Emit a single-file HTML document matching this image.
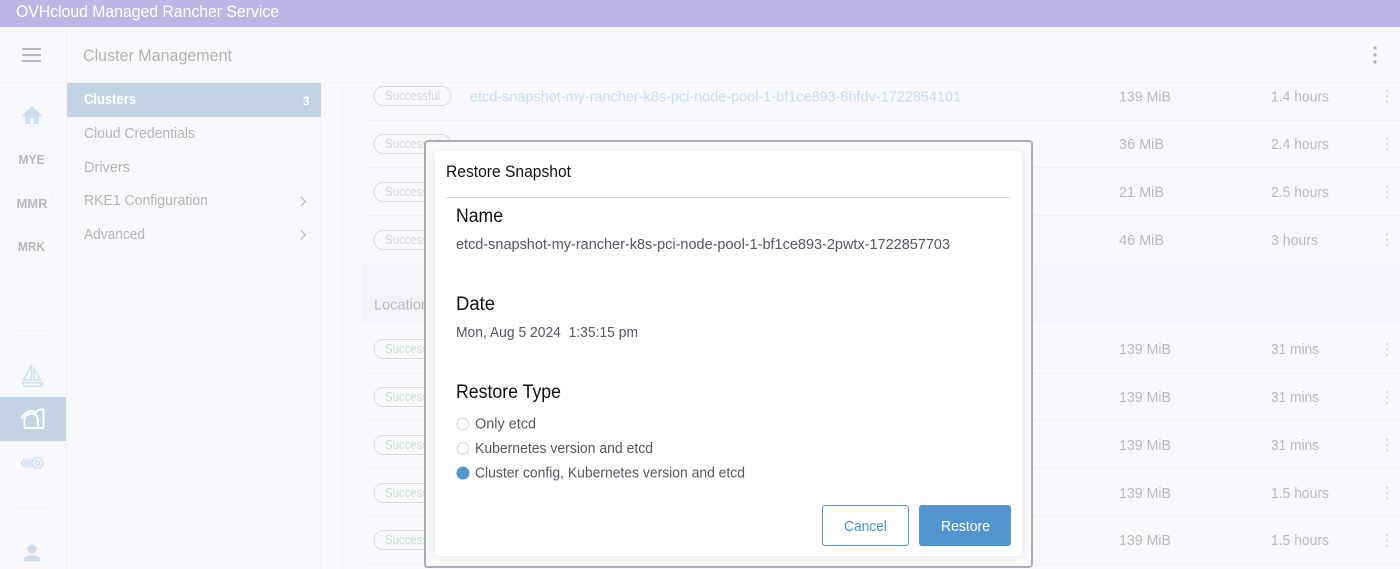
<!DOCTYPE html>
<html lang="en">
<head>
<meta charset="utf-8">
<title>Cluster Management</title>
<style>
html,body{margin:0;padding:0;width:1400px;height:569px;overflow:hidden;background:#f7f7fc}
svg{display:block;position:absolute;left:0;top:0;filter:blur(.3px)}
text{font-family:"Liberation Sans",sans-serif;white-space:pre}
.m{fill:#b4b4bc;font-size:14.5px}
.r{fill:#b9b9c1;font-size:14.5px}
.s{fill:#cddbd1;font-size:12.5px}
.d{fill:#55555f;font-size:14.5px}
.h{fill:#111;font-size:19px}
</style>
</head>
<body>
<svg width="1400" height="569" viewBox="0 0 1400 569" xmlns="http://www.w3.org/2000/svg">
<defs>
<filter id="sh" x="-5%" y="-5%" width="110%" height="110%"><feGaussianBlur stdDeviation="5"/></filter>
</defs>
<rect width="1400" height="569" fill="#f7f7fc"/>
<!-- top bar -->
<rect width="1400" height="27" fill="#bcb6e6"/>
<text x="16" y="17" fill="#fff" font-size="17" textLength="263" lengthAdjust="spacingAndGlyphs">OVHcloud Managed Rancher Service</text>
<!-- header -->
<rect x="0" y="82" width="1400" height="1" fill="#f0f0f6"/>
<rect x="66" y="27" width="1" height="542" fill="#f0f0f6"/>
<g fill="#b8b8c0"><rect x="22" y="48" width="19" height="2"/><rect x="22" y="54" width="19" height="2"/><rect x="22" y="60" width="19" height="2"/></g>
<text x="83" y="61" fill="#b2b2ba" font-size="17" textLength="149" lengthAdjust="spacingAndGlyphs">Cluster Management</text>
<g fill="#b0b0b8"><circle cx="1375" cy="48" r="1.6"/><circle cx="1375" cy="55" r="1.6"/><circle cx="1375" cy="62" r="1.6"/></g>
<!-- icon rail -->
<path d="M32 106 L22 116 H25 V124 H30 V118 H34 V124 H39 V116 H42 Z" fill="#c9deef"/>
<g fill="#f7f7fc" stroke="#f3f3f8"><rect x="11" y="145.500" width="41" height="27" rx="5"/><rect x="11" y="189.500" width="41" height="27" rx="5"/><rect x="11" y="232.500" width="41" height="27" rx="5"/></g>
<g fill="#b7b7bf" font-size="13" font-weight="700">
<text x="18.500" y="164" textLength="26" lengthAdjust="spacingAndGlyphs">MYE</text>
<text x="16.500" y="208" textLength="31" lengthAdjust="spacingAndGlyphs">MMR</text>
<text x="18" y="251" textLength="27" lengthAdjust="spacingAndGlyphs">MRK</text>
</g>
<rect x="12" y="330" width="41" height="1" fill="#f0f0f6"/>
<rect x="12" y="507" width="41" height="1" fill="#f0f0f6"/>
<!-- boat -->
<g fill="none" stroke="#cfe0f0" stroke-width="1.500">
<path d="M31.500 365 L23.500 380 H31.500 Z"/>
<path d="M34 369 V380 H40.500 Z"/>
<path d="M22.500 382.800 H42.500 L41 386.200 H24 Z"/>
</g>
<!-- active -->
<rect x="0" y="397" width="66" height="44" fill="#c2d4e4"/>
<g fill="none" stroke="#fff" stroke-width="1.900" stroke-linejoin="round" stroke-linecap="round">
<path d="M21.500 418 C24 413.500 28 411 31.500 411 C33 411 35 412 36 413"/>
<path d="M36 413 C37 410.500 39 409.500 41 409.500 L43.500 409.500 V428 H24.500 V418"/>
<path d="M24.500 418 C26 415 29 413.500 31.500 413.500 C35 413.500 38 417 38 421 V428"/>
</g>
<!-- fleet -->
<g fill="none" stroke="#cfe0f0" stroke-width="1.500">
<path d="M25 458.500 L21.500 463 L25 467.500"/><path d="M28 458.500 L24.500 463 L28 467.500"/><path d="M31 458.500 L27.500 463 L31 467.500"/><path d="M34 458.500 L30.500 463 L34 467.500"/>
<path d="M34.500 458 H40.500 L43.500 463 L40.500 468 H34.500 L31.500 463 Z"/><circle cx="37.500" cy="463" r="2.300"/>
</g>
<!-- user -->
<circle cx="32" cy="549" r="4.500" fill="#c9deef"/>
<path d="M23.500 561.500 C23.500 556.500 27.500 555.500 32 555.500 C36.500 555.500 40.500 556.500 40.500 561.500 Z" fill="#c9deef"/>
<!-- nav -->
<rect x="67" y="83" width="254" height="34" fill="#c2d4e4"/>
<rect x="320" y="117" width="2" height="452" fill="#f2f2f7"/>
<text x="84" y="104" fill="#fff" font-size="14.500" font-weight="700" textLength="52" lengthAdjust="spacingAndGlyphs">Clusters</text>
<text x="303" y="105" fill="#fff" font-size="12" font-weight="700">3</text>
<text class="m" x="84" y="138" textLength="111" lengthAdjust="spacingAndGlyphs">Cloud Credentials</text>
<text class="m" x="84" y="172" textLength="46" lengthAdjust="spacingAndGlyphs">Drivers</text>
<text class="m" x="84" y="205" textLength="124" lengthAdjust="spacingAndGlyphs">RKE1 Configuration</text>
<text class="m" x="84" y="239" textLength="61" lengthAdjust="spacingAndGlyphs">Advanced</text>
<g fill="none" stroke="#bcbcc4" stroke-width="1.300"><path d="M300.800 197 L305.500 201.500 L300.800 206"/><path d="M300.800 230.500 L305.500 235 L300.800 239.500"/></g>
<!-- table -->
<rect x="342" y="83" width="1" height="486" fill="#f0f0f6"/>
<rect x="362" y="83" width="1" height="486" fill="#f2f2f7"/>
<rect x="362" y="263" width="1038" height="60" fill="#f3f3f8"/>
<g fill="#f0f0f5">
<rect x="362" y="120" width="1038" height="1"/><rect x="362" y="167" width="1038" height="1"/><rect x="362" y="215" width="1038" height="1"/>
<rect x="362" y="373" width="1038" height="1"/><rect x="362" y="420" width="1038" height="1"/><rect x="362" y="468" width="1038" height="1"/><rect x="362" y="516" width="1038" height="1"/><rect x="362" y="564" width="1038" height="1"/>
</g>
<text x="374" y="309.500" fill="#b9b9c1" font-size="14.500" textLength="55" lengthAdjust="spacingAndGlyphs">Location</text>
<g fill="none" stroke="#d3e0d6">
<rect x="374" y="86.500" width="77" height="19" rx="9.500"/><rect x="374" y="134.500" width="77" height="19" rx="9.500"/><rect x="374" y="182.500" width="77" height="19" rx="9.500"/><rect x="374" y="230.500" width="77" height="19" rx="9.500"/>
<rect x="374" y="339.500" width="77" height="19" rx="9.500"/><rect x="374" y="387.500" width="77" height="19" rx="9.500"/><rect x="374" y="435.500" width="77" height="19" rx="9.500"/><rect x="374" y="483.500" width="77" height="19" rx="9.500"/><rect x="374" y="530.500" width="77" height="19" rx="9.500"/>
</g>
<g>
<text class="s" x="385" y="100" textLength="55" lengthAdjust="spacingAndGlyphs">Successful</text>
<text class="s" x="385" y="148" textLength="55" lengthAdjust="spacingAndGlyphs">Successful</text>
<text class="s" x="385" y="196" textLength="55" lengthAdjust="spacingAndGlyphs">Successful</text>
<text class="s" x="385" y="244" textLength="55" lengthAdjust="spacingAndGlyphs">Successful</text>
<text class="s" x="385" y="353" textLength="55" lengthAdjust="spacingAndGlyphs">Successful</text>
<text class="s" x="385" y="401" textLength="55" lengthAdjust="spacingAndGlyphs">Successful</text>
<text class="s" x="385" y="449" textLength="55" lengthAdjust="spacingAndGlyphs">Successful</text>
<text class="s" x="385" y="497" textLength="55" lengthAdjust="spacingAndGlyphs">Successful</text>
<text class="s" x="385" y="544" textLength="55" lengthAdjust="spacingAndGlyphs">Successful</text>
</g>
<text x="470" y="101.500" fill="#c8deef" font-size="14.500" textLength="491" lengthAdjust="spacingAndGlyphs">etcd-snapshot-my-rancher-k8s-pci-node-pool-1-bf1ce893-8hfdv-1722854101</text>
<g>
<text class="r" x="1119" y="101.500" textLength="52" lengthAdjust="spacingAndGlyphs">139 MiB</text><text class="r" x="1271" y="101.500" textLength="58" lengthAdjust="spacingAndGlyphs">1.4 hours</text>
<text class="r" x="1119" y="149" textLength="45" lengthAdjust="spacingAndGlyphs">36 MiB</text><text class="r" x="1271" y="149" textLength="58" lengthAdjust="spacingAndGlyphs">2.4 hours</text>
<text class="r" x="1119" y="197" textLength="45" lengthAdjust="spacingAndGlyphs">21 MiB</text><text class="r" x="1271" y="197" textLength="58" lengthAdjust="spacingAndGlyphs">2.5 hours</text>
<text class="r" x="1119" y="245" textLength="45" lengthAdjust="spacingAndGlyphs">46 MiB</text><text class="r" x="1271" y="245" textLength="47" lengthAdjust="spacingAndGlyphs">3 hours</text>
<text class="r" x="1119" y="354" textLength="52" lengthAdjust="spacingAndGlyphs">139 MiB</text><text class="r" x="1271" y="354" textLength="48" lengthAdjust="spacingAndGlyphs">31 mins</text>
<text class="r" x="1119" y="402" textLength="52" lengthAdjust="spacingAndGlyphs">139 MiB</text><text class="r" x="1271" y="402" textLength="48" lengthAdjust="spacingAndGlyphs">31 mins</text>
<text class="r" x="1119" y="450" textLength="52" lengthAdjust="spacingAndGlyphs">139 MiB</text><text class="r" x="1271" y="450" textLength="48" lengthAdjust="spacingAndGlyphs">31 mins</text>
<text class="r" x="1119" y="498" textLength="52" lengthAdjust="spacingAndGlyphs">139 MiB</text><text class="r" x="1271" y="498" textLength="58" lengthAdjust="spacingAndGlyphs">1.5 hours</text>
<text class="r" x="1119" y="545" textLength="52" lengthAdjust="spacingAndGlyphs">139 MiB</text><text class="r" x="1271" y="545" textLength="58" lengthAdjust="spacingAndGlyphs">1.5 hours</text>
</g>
<g fill="#c8deef">
<circle cx="1387" cy="91" r="1.100"/><circle cx="1387" cy="96.500" r="1.100"/><circle cx="1387" cy="102" r="1.100"/>
<circle cx="1387" cy="138.500" r="1.100"/><circle cx="1387" cy="144" r="1.100"/><circle cx="1387" cy="149.500" r="1.100"/>
<circle cx="1387" cy="186.500" r="1.100"/><circle cx="1387" cy="192" r="1.100"/><circle cx="1387" cy="197.500" r="1.100"/>
<circle cx="1387" cy="234" r="1.100"/><circle cx="1387" cy="239.500" r="1.100"/><circle cx="1387" cy="245" r="1.100"/>
<circle cx="1387" cy="344" r="1.100"/><circle cx="1387" cy="349.500" r="1.100"/><circle cx="1387" cy="355" r="1.100"/>
<circle cx="1387" cy="392" r="1.100"/><circle cx="1387" cy="397.500" r="1.100"/><circle cx="1387" cy="403" r="1.100"/>
<circle cx="1387" cy="439.500" r="1.100"/><circle cx="1387" cy="445" r="1.100"/><circle cx="1387" cy="450.500" r="1.100"/>
<circle cx="1387" cy="487.500" r="1.100"/><circle cx="1387" cy="493" r="1.100"/><circle cx="1387" cy="498.500" r="1.100"/>
<circle cx="1387" cy="535" r="1.100"/><circle cx="1387" cy="540.500" r="1.100"/><circle cx="1387" cy="546" r="1.100"/>
</g>
<!-- modal frame -->
<rect x="425" y="141" width="607" height="426" rx="3" fill="#fafafc" stroke="#aaacbc" stroke-width="2"/>
<rect x="435" y="152" width="587" height="404" rx="4" fill="#000" opacity=".09" filter="url(#sh)"/>
<rect x="435" y="151" width="587" height="405" rx="4" fill="#fff"/>
<text x="446" y="177" fill="#111" font-size="17" textLength="125" lengthAdjust="spacingAndGlyphs">Restore Snapshot</text>
<rect x="446" y="197" width="565" height="1" fill="#d6d6dd"/>
<text class="h" x="456" y="222" textLength="47" lengthAdjust="spacingAndGlyphs">Name</text>
<text class="d" x="456" y="249" textLength="494" lengthAdjust="spacingAndGlyphs">etcd-snapshot-my-rancher-k8s-pci-node-pool-1-bf1ce893-2pwtx-1722857703</text>
<text class="h" x="456" y="310" textLength="39" lengthAdjust="spacingAndGlyphs">Date</text>
<text class="d" x="456" y="337" textLength="182" lengthAdjust="spacingAndGlyphs">Mon, Aug 5 2024  1:35:15 pm</text>
<text class="h" x="456" y="398" textLength="105" lengthAdjust="spacingAndGlyphs">Restore Type</text>
<circle cx="463" cy="424" r="5.800" fill="#fff" stroke="#dcdce6" stroke-width="1.400"/>
<circle cx="463" cy="448.500" r="5.800" fill="#fff" stroke="#dcdce6" stroke-width="1.400"/>
<circle cx="463" cy="473" r="6.500" fill="#5294cf"/>
<text class="d" x="475" y="428.500" textLength="61" lengthAdjust="spacingAndGlyphs">Only etcd</text>
<text class="d" x="475" y="453" textLength="178" lengthAdjust="spacingAndGlyphs">Kubernetes version and etcd</text>
<text class="d" x="475" y="477.500" textLength="270" lengthAdjust="spacingAndGlyphs">Cluster config, Kubernetes version and etcd</text>
<rect x="822.500" y="505.500" width="86" height="40" rx="3" fill="#fff" stroke="#5294cf"/>
<text x="844" y="531" fill="#4a8fcb" font-size="14.500" textLength="43" lengthAdjust="spacingAndGlyphs">Cancel</text>
<rect x="919" y="505" width="92" height="41" rx="3" fill="#5294cf"/>
<text x="941" y="531" fill="#fff" font-size="14.500" textLength="49" lengthAdjust="spacingAndGlyphs">Restore</text>
</svg>
</body>
</html>
